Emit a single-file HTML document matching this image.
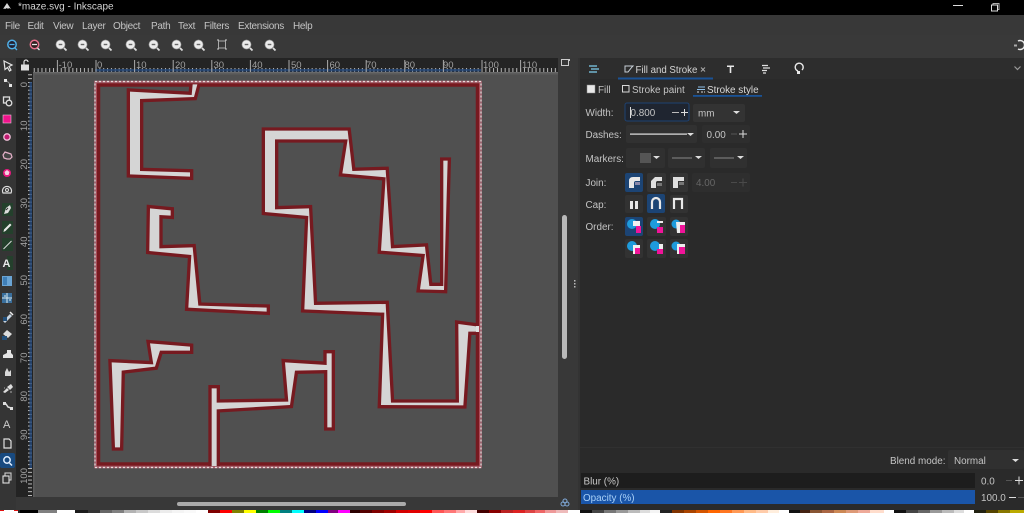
<!DOCTYPE html>
<html><head><meta charset="utf-8"><title>maze.svg - Inkscape</title>
<style>
html,body{margin:0;padding:0;background:#000;width:1024px;height:513px;overflow:hidden}
svg{display:block}
text{font-family:"Liberation Sans",sans-serif;font-size:9.9px;fill:#c4c4c4}
.m{letter-spacing:-.3px;font-size:10px}
.r{font-size:9.5px;fill:#a0a0a0}
.s{fill:#d5d5d5;stroke:#761a20;stroke-width:20;stroke-linejoin:miter;stroke-miterlimit:4;paint-order:stroke}
</style></head><body>
<svg width="1024" height="513" viewBox="0 0 1024 513" xmlns="http://www.w3.org/2000/svg">
<defs>
<pattern id="tx" patternUnits="userSpaceOnUse" width="3.86" height="4" patternTransform="translate(95.5 68)"><rect width="1" height="4" fill="#b8b8b8"/></pattern>
<pattern id="tx5" patternUnits="userSpaceOnUse" width="38.6" height="20" patternTransform="translate(95.5 0)"><rect width="1" height="20" fill="#aaa"/></pattern>
<pattern id="ty" patternUnits="userSpaceOnUse" width="4" height="3.86" patternTransform="translate(28 82)"><rect width="4" height="1" fill="#b8b8b8"/></pattern>
<symbol id="mag" viewBox="0 0 14 14" width="14" height="14"><circle cx="6.5" cy="6.5" r="4.6" fill="#ececec" stroke="#888" stroke-width=".6"/><rect x="4.7" y="5.8" width="3.6" height="1.4" fill="#666"/><path d="M10 10l2.500 2.500" stroke="#ddd" stroke-width="1.800"/></symbol>
<clipPath id="pg"><rect x="97" y="83.500" width="382" height="382.500"/></clipPath>
</defs>

<!-- base layout -->
<rect width="1024" height="513" fill="#383838"/>
<rect width="1024" height="15" fill="#000"/>
<rect y="35" width="1024" height="23" fill="#393939"/>
<rect x="578" y="58" width="446" height="455" fill="#2a2a2a"/>
<rect x="578" y="58" width="446" height="21" fill="#2d2d2d"/>
<rect x="578" y="58" width="2" height="452" fill="#333"/>
<rect x="558" y="58" width="20" height="452" fill="#383838"/>
<rect x="0" y="58" width="16" height="452" fill="#353535"/>

<!-- title bar -->
<path d="M3 9l4-6 4 6-2-1-1 1-1-1-2 1-2-1z" fill="#d8d8d8"/>
<text x="18" y="9.500" style="fill:#d4d4d4;font-size:10px">*maze.svg - Inkscape</text>
<rect x="953" y="5" width="10" height="1" fill="#ddd"/>
<rect x="993" y="3.500" width="6" height="6" fill="none" stroke="#aaa"/><rect x="991.500" y="5" width="6" height="6" fill="#000" stroke="#ddd"/>

<!-- menu -->
<g>
<text class="m" x="5" y="29">File</text><text class="m" x="27.500" y="29">Edit</text><text class="m" x="53" y="29">View</text><text class="m" x="82" y="29">Layer</text><text class="m" x="113" y="29">Object</text><text class="m" x="151" y="29">Path</text><text class="m" x="178" y="29">Text</text><text class="m" x="204" y="29">Filters</text><text class="m" x="238" y="29">Extensions</text><text class="m" x="293" y="29">Help</text>
</g>

<!-- command bar -->
<g fill="none">
<circle cx="12" cy="44.500" r="4.200" fill="#223" stroke="#4fb0e8" stroke-width="1.500"/><path d="M9.500 44.500h5M15 48l2 2" stroke="#4fb0e8" stroke-width="1.300"/>
<circle cx="34.500" cy="44.500" r="4.200" fill="#322" stroke="#e8708c" stroke-width="1.500"/><path d="M32 44.500h5M37.500 48l2 2" stroke="#e8e8e8" stroke-width="1.300"/>
</g>
<use href="#mag" x="54" y="38"/><use href="#mag" x="76" y="38"/><use href="#mag" x="99" y="38"/><use href="#mag" x="124" y="38"/><use href="#mag" x="147" y="38"/><use href="#mag" x="170" y="38"/><use href="#mag" x="192" y="38"/>
<rect x="218.500" y="41" width="7" height="7" fill="none" stroke="#aaa" stroke-width="1"/><path d="M217 40h2M225 40h2M217 49h2M225 49h2" stroke="#ccc"/>
<use href="#mag" x="240" y="38"/><use href="#mag" x="263" y="38"/>
<path d="M1018 41a4.500 4.500 0 1 1 0 8" fill="none" stroke="#e8e8e8" stroke-width="1.500"/><path d="M1014 44.500h3v2h-3z" fill="#aaa"/>

<!-- rulers -->
<rect x="16" y="58" width="542" height="15" fill="#242424"/>
<rect x="16" y="73" width="17" height="424" fill="#232323"/>
<rect x="33" y="68" width="525" height="4" fill="url(#tx)"/>
<rect x="95" y="69" width="386" height="2.500" fill="#24487a" opacity=".8"/>
<rect x="33" y="60" width="525" height="12" fill="url(#tx5)"/>
<rect x="33" y="72" width="525" height="1" fill="#6a6a6a"/>
<rect x="28" y="73" width="4" height="424" fill="url(#ty)"/>
<rect x="29.500" y="82" width="2.500" height="386" fill="#24487a" opacity=".8"/>
<g>
<text class="r" x="58.500" y="68">-10</text><text class="r" x="97" y="68">0</text><text class="r" x="136" y="68">10</text><text class="r" x="175" y="68">20</text><text class="r" x="213.500" y="68">30</text><text class="r" x="252" y="68">40</text><text class="r" x="291" y="68">50</text><text class="r" x="329.500" y="68">60</text><text class="r" x="366" y="68">70</text><text class="r" x="404.500" y="68">80</text><text class="r" x="443" y="68">90</text><text class="r" x="483" y="68">100</text><text class="r" x="522" y="68">110</text>
</g>
<g text-anchor="end">
<text class="r" transform="translate(27 82) rotate(-90)">0</text>
<text class="r" transform="translate(27 120.500) rotate(-90)">10</text>
<text class="r" transform="translate(27 159) rotate(-90)">20</text>
<text class="r" transform="translate(27 198) rotate(-90)">30</text>
<text class="r" transform="translate(27 236.500) rotate(-90)">40</text>
<text class="r" transform="translate(27 275) rotate(-90)">50</text>
<text class="r" transform="translate(27 314) rotate(-90)">60</text>
<text class="r" transform="translate(27 352.500) rotate(-90)">70</text>
<text class="r" transform="translate(27 391) rotate(-90)">80</text>
<text class="r" transform="translate(27 429.500) rotate(-90)">90</text>
<text class="r" transform="translate(27 468) rotate(-90)">100</text>
</g>
<!-- lock -->
<path d="M21 64.500h8v6h-8z" fill="#e0e0e0"/><path d="M24 64.500v-2.500a2 2 0 0 1 4 0" fill="none" stroke="#e0e0e0" stroke-width="1.200"/>

<!-- canvas -->
<rect x="33" y="73" width="525" height="424" fill="#505050"/>
<rect x="33" y="73" width="525" height="1.500" fill="#5c5c5c"/>
<rect x="33" y="73" width="1.500" height="424" fill="#5c5c5c"/>

<!-- page -->
<rect x="95" y="81.500" width="386" height="386" fill="none" stroke="#b26a78" stroke-width="1.500"/>
<rect x="95" y="81.500" width="386" height="386" fill="none" stroke="#e8dcdc" stroke-width="1.200" stroke-dasharray="2 2"/>
<rect x="96.500" y="83" width="383" height="383" fill="none" stroke="#b85a68" stroke-width="1"/>
<rect x="98.500" y="85" width="379" height="379" fill="#505050" stroke="#761a20" stroke-width="3.500"/>

<!-- maze shapes -->
<g clip-path="url(#pg)">
<g transform="translate(90 75) scale(.33333)">
<polygon class="s" points="120,50 305,60 308,28 322,28 312,66 150,72 150,288 300,292 300,305 120,298"/>
<polygon class="s" points="180,400 242,406 242,422 208,420 208,520 308,517 325,692 530,698 530,710 295,698 304,540 178,528"/>
</g>
<g transform="translate(255 120) scale(.33333)">
<polygon class="s" points="30,32 278,32 292,153 392,150 408,385 510,380 523,498 565,498 565,122 578,122 567,510 495,508 510,402 378,392 392,172 262,160 278,58 60,58 60,268 162,265 177,555 392,552 408,848 612,848 610,612 670,620 670,635 640,635 625,856 378,855 388,578 148,568 160,288 30,276"/>
</g>
<g transform="translate(90 330) scale(.33333)">
<polygon class="s" points="65,97 190,103 180,40 300,50 300,62 210,62 195,110 95,122 90,352 75,352"/>
<polygon class="s" points="365,175 380,175 380,218 595,215 585,97 710,105 710,70 725,70 725,292 712,292 712,120 615,122 600,225 380,238 380,420 365,420"/>
</g>
</g>
<rect x="476" y="326" width="3" height="6" fill="#e0e0e0"/>

<!-- left toolbar -->
<path d="M4 61l8 4-3 1.500 2 3.500-1.500 1-2-3.500-2.500 2z" fill="#333" stroke="#e4e4e4" stroke-width="1.200"/>
<g fill="#e4e4e4"><rect x="4" y="79" width="3" height="3"/><rect x="9" y="84" width="3" height="3"/><path d="M7 81l3 3" stroke="#888"/></g>
<rect x="3.500" y="97" width="6" height="6" fill="none" stroke="#ddd" stroke-width="1.300"/><circle cx="9" cy="103" r="2.800" fill="#333" stroke="#ddd" stroke-width="1.300"/>
<rect x="3" y="115" width="8" height="8" fill="#f0148c" stroke="#e8c0d8" stroke-width=".6"/>
<circle cx="7" cy="137" r="3.200" fill="#c01a70" stroke="#f0c0d8" stroke-width="1.300"/>
<path d="M3 155l2-3 3 1 3 1 1 3-2 2-3 0-3-1z" fill="#444" stroke="#e4b0c8" stroke-width="1.200"/>
<circle cx="7" cy="173" r="4" fill="#e81880"/><path d="M7 170l2.500 2-1 3h-3l-1-3z" fill="#f4d0e0"/>
<path d="M3 193a4.500 4.500 0 1 1 8 0z" fill="none" stroke="#ddd" stroke-width="1.200"/><circle cx="7" cy="190" r="1.500" fill="none" stroke="#ddd"/>
<rect x="2" y="203" width="11" height="13" fill="#24402c"/><path d="M4 214l2-6 4-3 1 3-3 5z" fill="#ddd"/><path d="M6 210l2-2" stroke="#333"/>
<rect x="2" y="221" width="11" height="13" fill="#24402c"/><path d="M3.500 232l2-1 6-6-1.500-1.500-6 6z" fill="#e8e8e8"/>
<rect x="2" y="238" width="11" height="13" fill="#24402c"/><path d="M3.500 249l8-8" stroke="#ddd" stroke-width="1"/>
<rect x="7" y="256" width="6" height="14" fill="#24402c"/><text x="2.500" y="267" style="font-size:11px;font-weight:bold;fill:#e8e8e8">A</text>
<rect x="2" y="276" width="10" height="10" fill="#6aa4d4"/><rect x="3" y="277" width="4" height="8" fill="#3f7fb8"/>
<rect x="2" y="293" width="10" height="10" fill="#3a6f9c"/><path d="M7 293v10M2 298h10M4 296h2M9 300h2" stroke="#d8e8f0" stroke-width="1"/>
<path d="M3 321l7-7 2 2-7 7z" fill="#c8d4e0"/><rect x="3" y="317" width="4" height="4" fill="#24507a"/><path d="M10 312l3 3" stroke="#eee" stroke-width="1.500"/>
<path d="M3 334l4-4 5 4-4 4z" fill="#ddd"/><rect x="2" y="336" width="5" height="4" fill="#24507a"/>
<path d="M3 358v-3l4-2v-3h4v3l2 2v3z" fill="#e4e4e4"/>
<path d="M5 376v-4l2-4 2 4 2-2v6z" fill="#d8d8d8"/>
<path d="M3 392l4-4 2 2-4 3zM7 387l4-3 2 3-3 3z" fill="#ddd"/><path d="M4 388h1M10 392h2" stroke="#aaa"/>
<path d="M4 404l2 0 2 3 3 1" fill="none" stroke="#ddd" stroke-width="1.500"/><rect x="3" y="402" width="3" height="3" fill="#ddd"/><rect x="10" y="407" width="3" height="3" fill="#ddd"/>
<text x="3" y="428" style="font-size:11px;fill:#ccc">A</text>
<path d="M4 439h5l2 2v7h-7z" fill="none" stroke="#e0e0e0" stroke-width="1.200"/>
<rect x="0" y="453" width="15" height="15" rx="2" fill="#184a80"/><circle cx="7" cy="460" r="3.200" fill="none" stroke="#e0eeff" stroke-width="1.500"/><path d="M9.500 463l2.500 2.500" stroke="#e0eeff" stroke-width="1.500"/>
<rect x="5" y="473" width="6" height="7" fill="none" stroke="#ccc" stroke-width="1.100"/><rect x="3" y="476" width="6" height="7" fill="#353535" stroke="#e0e0e0" stroke-width="1.100"/>

<!-- right strip -->
<rect x="561.500" y="59.500" width="7" height="6" fill="none" stroke="#ccc" stroke-width="1"/><rect x="568" y="59" width="2" height="2" fill="#ccc"/>
<rect x="562" y="215" width="5" height="144" rx="2.500" fill="#b8b8b8"/>
<g fill="#bbb"><rect x="574" y="280" width="1.500" height="1.500"/><rect x="574" y="283" width="1.500" height="1.500"/><rect x="574" y="286" width="1.500" height="1.500"/></g>

<!-- scrollbar / status -->
<rect x="177" y="502" width="229" height="4" rx="2" fill="#aaa"/>
<circle cx="563" cy="504" r="2" fill="none" stroke="#7fa8d8"/><circle cx="567" cy="504" r="2" fill="none" stroke="#7fa8d8"/><circle cx="565" cy="501" r="2" fill="none" stroke="#7fa8d8"/>

<!-- palette -->
<rect y="510" width="1024" height="3" fill="#2a2a2a"/>
<g>
<rect x="0" y="510" width="18" height="3" fill="#fff"/><rect x="0" y="510" width="4" height="1" fill="#e01010"/><rect x="14" y="510" width="4" height="1" fill="#e01010"/>
<rect x="20" y="510" width="18" height="3" fill="#000"/><rect x="38" y="510" width="19" height="3" fill="#808080"/><rect x="57" y="510" width="18" height="3" fill="#fff"/>
<rect x="75" y="510" width="13" height="3" fill="#1c1c1c"/><rect x="88" y="510" width="12" height="3" fill="#333"/><rect x="100" y="510" width="12" height="3" fill="#666"/><rect x="112" y="510" width="12" height="3" fill="#808080"/><rect x="124" y="510" width="12" height="3" fill="#b3b3b3"/><rect x="136" y="510" width="12" height="3" fill="#c8c8c8"/><rect x="148" y="510" width="12" height="3" fill="#dcdcdc"/><rect x="160" y="510" width="12" height="3" fill="#ececec"/><rect x="172" y="510" width="12" height="3" fill="#f4f4f4"/><rect x="184" y="510" width="12" height="3" fill="#f9f9f9"/><rect x="196" y="510" width="12" height="3" fill="#fff"/>
<rect x="208" y="510" width="12" height="3" fill="#800000"/><rect x="220" y="510" width="12" height="3" fill="#f00"/><rect x="232" y="510" width="12" height="3" fill="#808000"/><rect x="244" y="510" width="12" height="3" fill="#ff0"/><rect x="256" y="510" width="12" height="3" fill="#008000"/><rect x="268" y="510" width="12" height="3" fill="#0f0"/><rect x="280" y="510" width="12" height="3" fill="#008080"/><rect x="292" y="510" width="12" height="3" fill="#0ff"/><rect x="304" y="510" width="12" height="3" fill="#000080"/><rect x="316" y="510" width="12" height="3" fill="#00f"/><rect x="328" y="510" width="10" height="3" fill="#800080"/><rect x="338" y="510" width="12" height="3" fill="#f0f"/>
<rect x="350" y="510" width="10" height="3" fill="#2b0000"/><rect x="360" y="510" width="12" height="3" fill="#550000"/><rect x="372" y="510" width="12" height="3" fill="#800000"/><rect x="384" y="510" width="12" height="3" fill="#a00000"/><rect x="396" y="510" width="12" height="3" fill="#d40000"/><rect x="408" y="510" width="12" height="3" fill="#e00000"/><rect x="420" y="510" width="12" height="3" fill="#f00"/><rect x="432" y="510" width="12" height="3" fill="#f55"/><rect x="444" y="510" width="12" height="3" fill="#f77"/><rect x="456" y="510" width="9" height="3" fill="#faa"/><rect x="465" y="510" width="12" height="3" fill="#fdd"/>
<rect x="477" y="510" width="12" height="3" fill="#400"/><rect x="489" y="510" width="12" height="3" fill="#800"/><rect x="501" y="510" width="12" height="3" fill="#b22"/><rect x="513" y="510" width="12" height="3" fill="#d22"/><rect x="525" y="510" width="10" height="3" fill="#d44"/><rect x="535" y="510" width="10" height="3" fill="#e66"/><rect x="545" y="510" width="11" height="3" fill="#e99"/><rect x="556" y="510" width="12" height="3" fill="#ebb"/><rect x="568" y="510" width="12" height="3" fill="#fff"/>
<rect x="580" y="510" width="12" height="3" fill="#111"/><rect x="592" y="510" width="12" height="3" fill="#444"/><rect x="604" y="510" width="12" height="3" fill="#777"/><rect x="616" y="510" width="12" height="3" fill="#999"/><rect x="628" y="510" width="12" height="3" fill="#bbb"/><rect x="640" y="510" width="10" height="3" fill="#ddd"/><rect x="650" y="510" width="10" height="3" fill="#f4f4f4"/>
<rect x="660" y="510" width="12" height="3" fill="#222"/><rect x="672" y="510" width="12" height="3" fill="#803300"/><rect x="684" y="510" width="12" height="3" fill="#a40"/><rect x="696" y="510" width="12" height="3" fill="#d45500"/><rect x="708" y="510" width="12" height="3" fill="#f60"/><rect x="720" y="510" width="12" height="3" fill="#f72"/><rect x="732" y="510" width="12" height="3" fill="#f95"/><rect x="744" y="510" width="12" height="3" fill="#fb8"/><rect x="756" y="510" width="12" height="3" fill="#fca"/><rect x="768" y="510" width="11" height="3" fill="#fed"/><rect x="779" y="510" width="10" height="3" fill="#fff"/>
<rect x="789" y="510" width="11" height="3" fill="#111"/><rect x="800" y="510" width="10" height="3" fill="#421"/><rect x="810" y="510" width="12" height="3" fill="#853"/><rect x="822" y="510" width="12" height="3" fill="#a64"/><rect x="834" y="510" width="12" height="3" fill="#c85"/><rect x="846" y="510" width="12" height="3" fill="#d97"/><rect x="858" y="510" width="12" height="3" fill="#ea9"/><rect x="870" y="510" width="14" height="3" fill="#fdc"/><rect x="884" y="510" width="10" height="3" fill="#fff"/>
<rect x="894" y="510" width="12" height="3" fill="#111"/><rect x="906" y="510" width="12" height="3" fill="#444"/><rect x="918" y="510" width="12" height="3" fill="#666"/><rect x="930" y="510" width="12" height="3" fill="#999"/><rect x="942" y="510" width="12" height="3" fill="#bbb"/><rect x="954" y="510" width="10" height="3" fill="#ddd"/><rect x="964" y="510" width="10" height="3" fill="#fff"/>
<rect x="974" y="510" width="12" height="3" fill="#221"/><rect x="986" y="510" width="12" height="3" fill="#540"/><rect x="998" y="510" width="12" height="3" fill="#870"/><rect x="1010" y="510" width="14" height="3" fill="#ba0"/>
</g>

<!-- panel tabs -->
<path d="M589 66h8M591 69h8M589 72h8" stroke="#7fd0f0" stroke-width="1.300"/>
<path d="M625 66h8l-1 1-4 5h-3z" fill="none" stroke="#c8d0d8" stroke-width="1"/>
<text x="635.500" y="73" style="font-size:9.700px;fill:#d4d4d4">Fill and Stroke</text>
<path d="M701 67.500l4 4M705 67.500l-4 4" stroke="#aaa" stroke-width="1"/>
<rect x="618" y="77.500" width="95" height="2" fill="#1a5296"/>
<path d="M727 65.500h7v1.500h-2.700v6h-1.600v-6h-2.700z" fill="#e8e8e8"/>
<path d="M762 65.500h6M763 68h7M762 70.500h5M763 73h3" stroke="#e0e0e0" stroke-width="1.300"/>
<path d="M798 71a4 4 0 1 1 4-1" fill="none" stroke="#e8e8e8" stroke-width="1.400"/><rect x="797" y="71" width="3" height="3" fill="#e8e8e8"/>
<path d="M1014.500 66.500l3 3 3-3" fill="none" stroke="#999" stroke-width="1.200"/>

<rect x="587" y="85" width="8" height="8" fill="#e8e8e8" stroke="#888" stroke-width=".5"/>
<text x="598" y="93">Fill</text>
<rect x="622.500" y="85.500" width="6.500" height="6.500" fill="none" stroke="#d8d8d8" stroke-width="1"/>
<text x="632" y="93">Stroke paint</text>
<path d="M698 87h7M697 89.500h8" stroke="#8fc0e8" stroke-width="1"/><path d="M697 92h2M701 92h2M704 92h1" stroke="#d8d8d8" stroke-width="1"/>
<text x="707" y="93" style="fill:#d8d8d8">Stroke style</text>
<rect x="693" y="95" width="69" height="1.800" fill="#1a5296"/>

<!-- Form -->
<text x="585.500" y="116">Width:</text>
<rect x="625" y="103" width="64" height="18" rx="2" fill="#1f2530" stroke="#1e4272"/>
<rect x="630" y="107" width="1" height="11" fill="#ddd"/>
<text x="630.500" y="116">0.800</text>
<path d="M672 112.500h7" stroke="#bbb"/><path d="M681 112.500h7M684.500 109v7" stroke="#ddd"/>
<rect x="693" y="104" width="52" height="18" rx="2" fill="#333"/>
<text x="698" y="116.500">mm</text><path d="M733 111h7l-3.500 3z" fill="#ddd"/>

<text x="585.500" y="138">Dashes:</text>
<rect x="626" y="125" width="71" height="18" rx="2" fill="#313131"/>
<rect x="630" y="133.500" width="57" height="1.200" fill="#e4e4e4"/><path d="M687 133h7l-3.500 3z" fill="#ddd"/>
<rect x="702" y="125" width="48" height="18" rx="2" fill="#2e2e2e"/>
<text x="706.500" y="138">0.00</text><path d="M731 134h6" stroke="#555"/><path d="M739 134h8M743 130v8" stroke="#ddd"/>

<text x="585.500" y="162">Markers:</text>
<rect x="626" y="148" width="39" height="20" rx="2" fill="#303030"/><rect x="640" y="153" width="11" height="10" fill="#555"/><path d="M653 156h7l-3.500 3z" fill="#ddd"/>
<rect x="668" y="148" width="37" height="20" rx="2" fill="#303030"/><path d="M672 158h20" stroke="#888"/><path d="M695 156h7l-3.500 3z" fill="#ddd"/>
<rect x="710" y="148" width="37" height="20" rx="2" fill="#303030"/><path d="M714 158h20" stroke="#888"/><path d="M737 156h7l-3.500 3z" fill="#ddd"/>

<text x="585.500" y="186">Join:</text>
<rect x="625" y="173" width="18" height="19" rx="2" fill="#1c4474"/>
<rect x="647" y="173" width="19" height="19" rx="2" fill="#343434"/>
<rect x="670" y="173" width="18" height="19" rx="2" fill="#343434"/>
<path d="M629 188v-7q0-4 4-4h7v4h-4q-2 0-2 2v5z" fill="#e8e8e8"/><path d="M635 182h5v3h-5z" fill="#88a"/>
<path d="M651 188v-7l4-4h7v4h-5l-1 1v6z" fill="#e0e0e0"/><path d="M657 183h5v3h-5z" fill="#777"/>
<path d="M673 188v-11h11v4h-6v7z" fill="#e0e0e0"/><path d="M679 182h5v3h-5z" fill="#777"/>
<rect x="692" y="173" width="58" height="19" rx="2" fill="#2e2e2e"/>
<text x="696" y="186" style="fill:#666">4.00</text><path d="M731 182.500h6M739 182.500h8M743 178.500v8" stroke="#4a4a4a"/>

<text x="585.500" y="208">Cap:</text>
<rect x="625" y="195" width="18" height="18" rx="2" fill="#323232"/>
<rect x="647" y="194" width="18" height="19" rx="2" fill="#1c4474"/>
<rect x="670" y="195" width="18" height="18" rx="2" fill="#323232"/>
<rect x="630" y="201" width="3" height="8" fill="#e8e8e8"/><rect x="635" y="201" width="3" height="8" fill="#e8e8e8"/>
<path d="M652 209v-7a4 4 0 0 1 8 0v7" fill="none" stroke="#e8e8e8" stroke-width="2.200"/>
<path d="M674 209v-10h8v10" fill="none" stroke="#e8e8e8" stroke-width="2.200"/>

<text x="585.500" y="230">Order:</text>
<g>
<rect x="625" y="217" width="18" height="19" rx="2" fill="#1c4474"/><circle cx="632" cy="224" r="5" fill="#1e9bdc"/><rect x="636" y="226" width="5" height="7" fill="#f0149a"/><rect x="633" y="221" width="7" height="5" fill="#f0f0f0"/>
<rect x="647" y="217" width="19" height="19" rx="2" fill="#323232"/><circle cx="655" cy="224" r="5" fill="#1e9bdc"/><rect x="657" y="227" width="6" height="6" fill="#f0149a"/><path d="M657 221h6v2h-6z" fill="#eee"/>
<rect x="670" y="217" width="18" height="19" rx="2" fill="#323232"/><circle cx="676" cy="224" r="4.500" fill="#1e9bdc"/><rect x="678" y="225" width="7" height="8" fill="#f0149a"/><path d="M676 222h9v3h-5v8h-3z" fill="#eee"/>
<rect x="625" y="239" width="18" height="19" rx="2" fill="#323232"/><circle cx="632" cy="246" r="5" fill="#1e9bdc"/><rect x="633" y="245" width="7" height="9" fill="#f0f0f0"/><rect x="635" y="248" width="5" height="6" fill="#f0149a"/>
<rect x="647" y="239" width="19" height="19" rx="2" fill="#323232"/><circle cx="655" cy="246" r="5" fill="#1e9bdc"/><rect x="657" y="249" width="6" height="5" fill="#f0149a"/><rect x="659" y="244" width="4" height="5" fill="#eee"/>
<rect x="670" y="239" width="18" height="19" rx="2" fill="#323232"/><circle cx="676" cy="246" r="4.500" fill="#1e9bdc"/><rect x="677" y="244" width="8" height="10" fill="#eee"/><rect x="679" y="247" width="6" height="7" fill="#f0149a"/>
</g>

<!-- bottom panel -->
<rect x="580" y="447" width="444" height="1" fill="#303030"/>
<text x="890" y="464">Blend mode:</text>
<rect x="948" y="450" width="76" height="19" rx="2" fill="#303030"/>
<text x="954" y="464">Normal</text><path d="M1012 459h7l-3.500 3z" fill="#ddd"/>
<rect x="581" y="473" width="394" height="15" fill="#1d1d1d"/>
<text x="583.500" y="484.500" style="fill:#c8c8c8">Blur (%)</text>
<text x="981" y="484.500">0.0</text><path d="M1006 480.500h6" stroke="#555"/><path d="M1015 480.500h8M1019 476.500v8" stroke="#ddd"/>
<rect x="581" y="490" width="394" height="14" fill="#1a55a8"/>
<text x="583" y="501" style="fill:#a8d0f8">Opacity (%)</text>
<text x="981" y="501">100.0</text><path d="M1009 497.500h7" stroke="#ddd"/><path d="M1018 497.500h6" stroke="#555"/>
</svg>
</body></html>
